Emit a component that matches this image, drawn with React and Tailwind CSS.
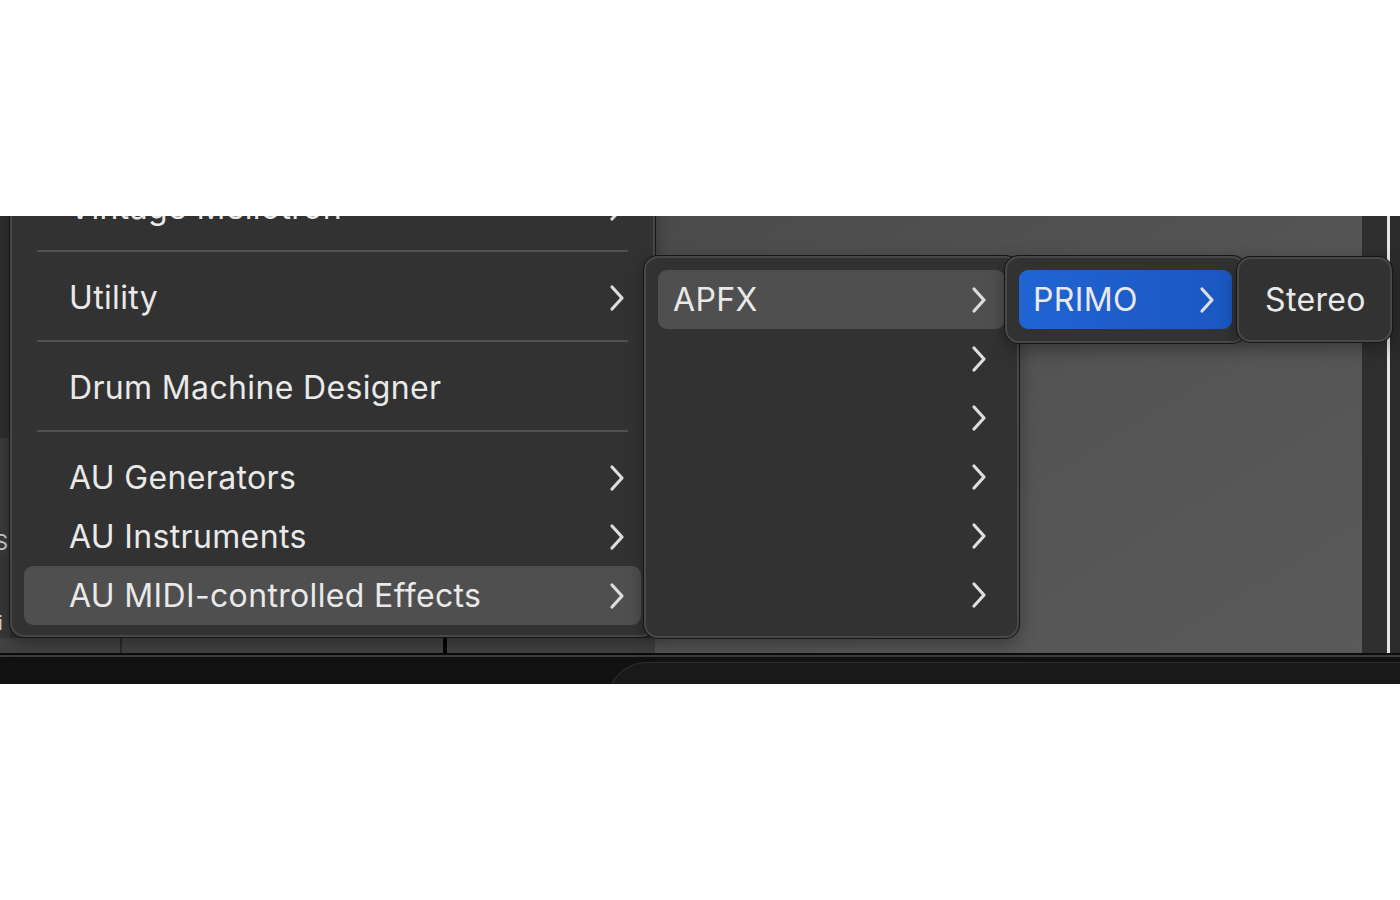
import React from "react";

function Chevron({ className = "" }) {
  return (
    <svg
      width="16"
      height="28"
      viewBox="0 0 16 28"
      fill="none"
      className={className}
    >
      <polyline
        points="3,3 13,14 3,25"
        stroke="#dedede"
        strokeWidth="3.2"
        strokeLinecap="round"
        strokeLinejoin="round"
      />
    </svg>
  );
}

function Row({ label, chevron = true, active = false, blue = false, textPad = "pl-[45px]", chevPad = "pr-[16px]" }) {
  let bg = "";
  if (active) bg = "bg-[#4f4f4f]";
  if (blue) bg = "bg-gradient-to-r from-[#2064d3] to-[#1b57c2]";
  return (
    <div
      className={`flex h-[59px] items-center justify-between rounded-[9px] ${textPad} ${chevPad} ${bg}`}
    >
      <span className="whitespace-nowrap text-[32px] leading-none tracking-[0.35px] text-[#e9e9e9]">
        {label}
      </span>
      {chevron && <Chevron />}
    </div>
  );
}

function Separator() {
  return (
    <div className="flex h-[31px] items-start px-[13px] pt-[13px]">
      <div className="h-[2px] w-full bg-[#525252]" />
    </div>
  );
}

const panel =
  "absolute rounded-[14px] border-2 border-[#484848] bg-[#323232] shadow-[0_0_0_1px_#161616,0_6px_18px_rgba(0,0,0,0.35)]";

export default function App() {
  return (
    <div
      className="h-[900px] w-[1400px] bg-white"
      style={{ fontFamily: "Inter, 'Noto Sans', sans-serif" }}
    >
      <div className="h-[216px]" />
      <div className="relative h-[468px] overflow-hidden bg-[#2d2d2d]">
        {/* window behind the menus */}
        <div className="flex h-[437px]">
          <div className="flex w-[10px] flex-col">
            <div className="h-[222px] bg-[#2f2f2f]" />
            <div className="h-[92px] bg-[#3b3b3b]" />
            <div className="flex h-[24px] items-center overflow-hidden bg-[#3b3b3b] text-[22px] leading-none text-[#cfcfcf]">
              <span className="-ml-[6px]">S</span>
            </div>
            <div className="flex flex-1 items-end overflow-hidden bg-[#383838] pb-[20px] text-[20px] leading-none text-[#cfcfcf]">
              <span className="-ml-[2px]">i</span>
            </div>
          </div>
          <div className="w-[645px] bg-[#303030]" />
          <div className="flex-1 bg-gradient-to-br from-[#4b4b4b] via-[#545454] to-[#5a5a5a]" />
          <div className="w-[25px] bg-[#2f2f2f]" />
          <div className="w-[3px] bg-[#e6e6e6]" />
          <div className="w-[10px] bg-[#2b2b2b]" />
        </div>
        <div className="h-[2px] bg-[#0c0c0c]" />
        <div className="h-[2px] bg-[#3c3c3c]" />
        <div className="relative h-[27px] bg-[#121212]">
          <div className="absolute left-[607px] top-[5px] h-[60px] w-[900px] rounded-tl-[40px] border-l border-t border-[#2e2e2e] bg-[#191919]" />
        </div>

        {/* strip under first menu */}
        <div className="absolute left-0 top-[422px] flex h-[15px] w-[655px] bg-[#424242]">
          <div className="w-[120px]" />
          <div className="w-[2px] bg-[#2a2a2a]" />
          <div className="w-[321px]" />
          <div className="w-[4px] bg-[#050505]" />
        </div>

        {/* first menu */}
        <div className={`${panel} bottom-[47px] left-[10px] w-[645px] px-[12px] pb-[10px]`}>
          <Row label="Vintage Mellotron" />
          <Separator />
          <Row label="Utility" />
          <Separator />
          <Row label="Drum Machine Designer" chevron={false} />
          <Separator />
          <Row label="AU Generators" />
          <Row label="AU Instruments" />
          <Row label="AU MIDI-controlled Effects" active />
        </div>

        {/* second menu */}
        <div className={`${panel} left-[644px] top-[40px] w-[375px] px-[12px] py-[12px]`}>
          <Row label="APFX" active textPad="pl-[15px]" chevPad="pr-[18px]" />
          <Row label="" chevPad="pr-[18px]" />
          <Row label="" chevPad="pr-[18px]" />
          <Row label="" chevPad="pr-[18px]" />
          <Row label="" chevPad="pr-[18px]" />
          <Row label="" chevPad="pr-[18px]" />
        </div>

        {/* third menu */}
        <div className={`${panel} left-[1005px] top-[40px] w-[241px] px-[12px] py-[12px]`}>
          <Row label="PRIMO" blue textPad="pl-[14px]" chevPad="pr-[17px]" />
        </div>

        {/* fourth menu */}
        <div className={`${panel} left-[1237px] top-[41px] w-[155px] px-[12px] py-[11px]`}>
          <Row label="Stereo" chevron={false} textPad="pl-[14px]" />
        </div>
      </div>
    </div>
  );
}
